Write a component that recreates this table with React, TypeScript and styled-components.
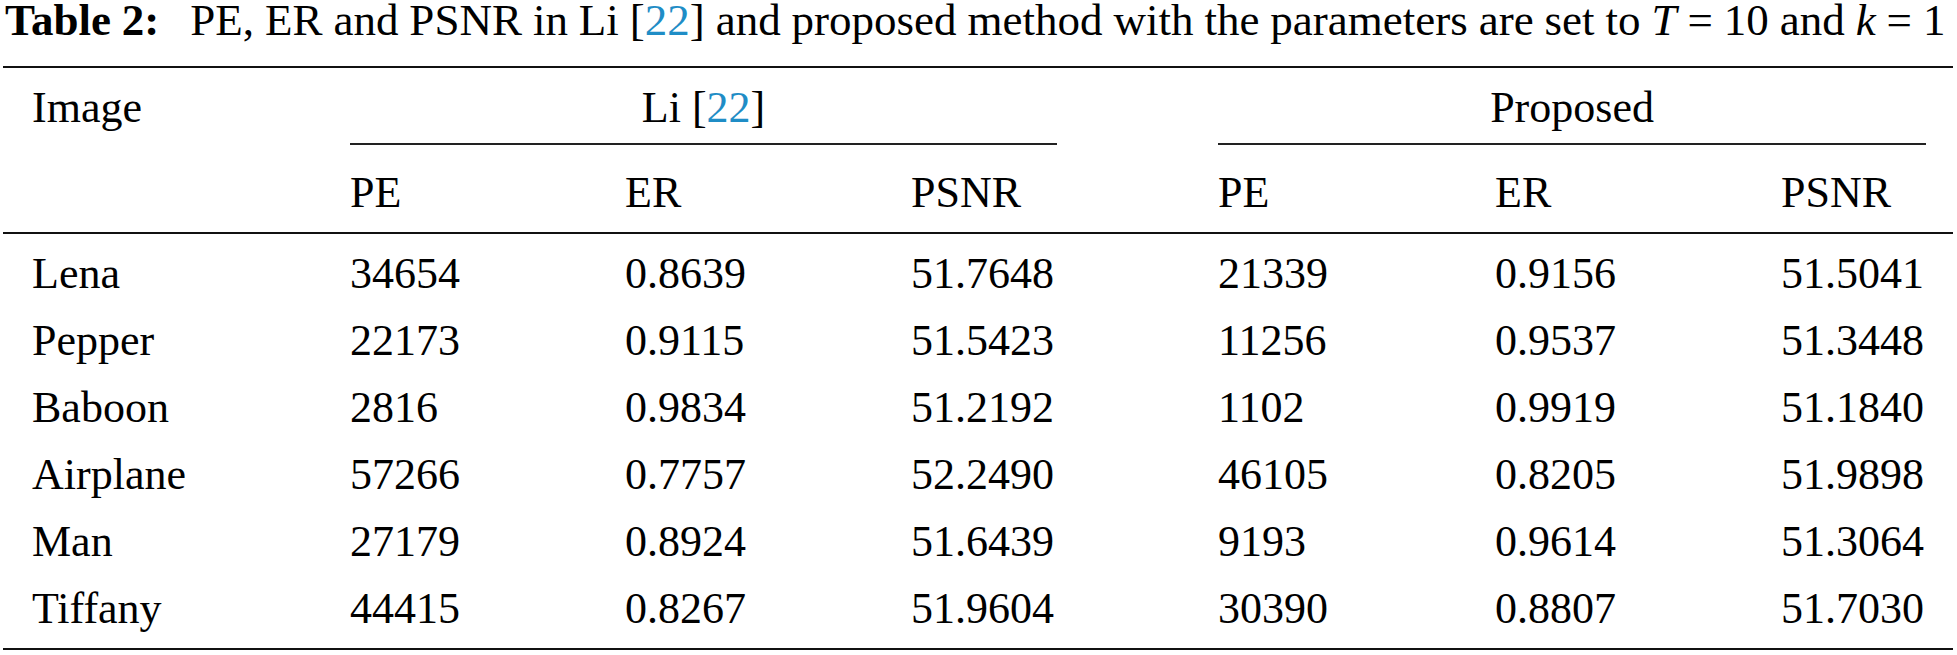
import styled, { createGlobalStyle } from "styled-components"

const GlobalStyle = createGlobalStyle`
  body {
    margin: 0;
    background: #fff;
    color: #000;
    font-family: "Liberation Serif", "Times New Roman", serif;
  }
`

const Page = styled.div`
  padding: 0 4px 0 3px;
`

const Caption = styled.div`
  font-size: 45px;
  line-height: 40px;
  white-space: nowrap;
  padding-left: 2px;
  margin-bottom: 26px;
  word-spacing: -0.3px;

  b {
    font-weight: 700;
    margin-right: 20px;
  }
  i {
    font-style: italic;
  }
`

const Ref = styled.span`
  color: #1f8dc6;
`

const Table = styled.table`
  width: 100%;
  border-collapse: collapse;
  table-layout: fixed;
  border-top: 2px solid #111;
  border-bottom: 2px solid #111;
  font-size: 44px;
  line-height: 67px;
`

const Th = styled.th<{ $first?: boolean; $sub?: boolean }>`
  font-weight: 400;
  text-align: left;
  vertical-align: top;
  padding: ${(p) => (p.$sub ? "14px 0 6px" : "6px 0 0")};
  padding-left: ${(p) => (p.$first ? "29px" : "0")};
  border-bottom: ${(p) => (p.$sub || p.$first ? "2px solid #111" : "none")};
`

const GroupCell = styled.th<{ $trim: number }>`
  font-weight: 400;
  padding: 6px ${(p) => p.$trim}px 0 0;
  vertical-align: top;
`

const GroupLabel = styled.div`
  text-align: center;
  padding-bottom: 2px;
  border-bottom: 2px solid #222;
`

const Row = styled.tr`
  &:first-child td {
    padding-top: 6px;
  }
  &:last-child td {
    padding-bottom: 6px;
  }
`

const Td = styled.td<{ $first?: boolean }>`
  padding: 0;
  padding-left: ${(p) => (p.$first ? "29px" : "0")};
  white-space: nowrap;
`

const colWidths = [347, 275, 286, 307, 277, 286, 172]

const rows = [
  ["Lena", "34654", "0.8639", "51.7648", "21339", "0.9156", "51.5041"],
  ["Pepper", "22173", "0.9115", "51.5423", "11256", "0.9537", "51.3448"],
  ["Baboon", "2816", "0.9834", "51.2192", "1102", "0.9919", "51.1840"],
  ["Airplane", "57266", "0.7757", "52.2490", "46105", "0.8205", "51.9898"],
  ["Man", "27179", "0.8924", "51.6439", "9193", "0.9614", "51.3064"],
  ["Tiffany", "44415", "0.8267", "51.9604", "30390", "0.8807", "51.7030"],
]

const subHeads = ["PE", "ER", "PSNR", "PE", "ER", "PSNR"]

export default function App() {
  return (
    <Page>
      <GlobalStyle />
      <Caption>
        <b>Table 2:</b> PE, ER and PSNR in Li [<Ref>22</Ref>] and proposed method
        with the parameters are set to <i>T</i> = 10 and <i>k</i> = 1
      </Caption>
      <Table>
        <colgroup>
          {colWidths.map((w, i) => (
            <col key={i} style={{ width: w }} />
          ))}
        </colgroup>
        <thead>
          <tr>
            <Th $first rowSpan={2}>
              Image
            </Th>
            <GroupCell colSpan={3} $trim={161}>
              <GroupLabel>
                Li [<Ref>22</Ref>]
              </GroupLabel>
            </GroupCell>
            <GroupCell colSpan={3} $trim={27}>
              <GroupLabel>Proposed</GroupLabel>
            </GroupCell>
          </tr>
          <tr>
            {subHeads.map((h, i) => (
              <Th key={i} $sub>
                {h}
              </Th>
            ))}
          </tr>
        </thead>
        <tbody>
          {rows.map((r) => (
            <Row key={r[0]}>
              {r.map((v, i) => (
                <Td key={i} $first={i === 0}>
                  {v}
                </Td>
              ))}
            </Row>
          ))}
        </tbody>
      </Table>
    </Page>
  )
}
